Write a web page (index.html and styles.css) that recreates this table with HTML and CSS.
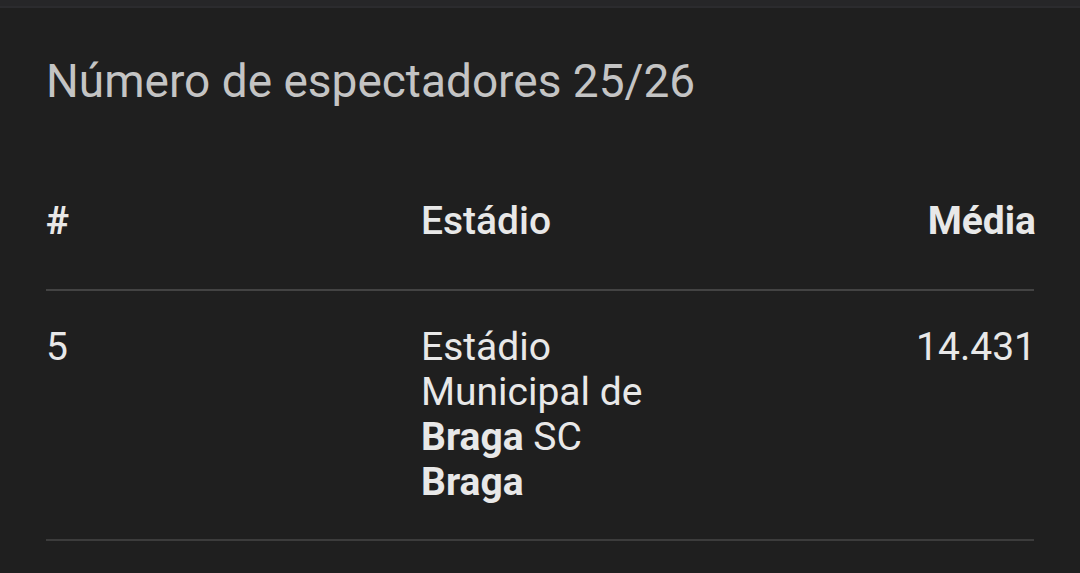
FILE: index.html
```html
<!DOCTYPE html>
<html lang="pt">

<head>
    <meta charset="UTF-8">
    <meta name="viewport" content="width=device-width, initial-scale=1.0">
    <title>Número de espectadores 25/26</title>
    <link rel="stylesheet" href="styles.css">
</head>

<body>
    <div class="top-bar"></div>
    <div class="card">
        <h2 class="card-title">Número de espectadores 25/26</h2>

        <div class="stats-table">
            <div class="row head">
                <div class="cell strong">#</div>
                <div class="cell">Estádio</div>
                <div class="cell num strong">Média</div>
            </div>
            <div class="row">
                <div class="cell">5</div>
                <div class="cell">Estádio Municipal de <b>Braga</b> SC <b>Braga</b></div>
                <div class="cell num">14.431</div>
            </div>
        </div>
    </div>
</body>

</html>
```

FILE: styles.css
```css
body {
    margin: 0;
    background-color: #1f1f1f;
    font-family: Roboto, "Noto Sans", sans-serif;
    color: #e8e8e8;
}

.top-bar {
    height: 6px;
    background-color: #262628;
    border-bottom: 2px solid #2b2b2e;
}

.card {
    padding: 0 46px;
}

.card-title {
    margin: 0;
    padding-top: 45px;
    font-size: 46px;
    font-weight: 400;
    line-height: 56px;
    color: #c4c4c4;
}

.stats-table {
    margin-top: 90px;
}

.row {
    display: grid;
    grid-template-columns: 375px 260px 1fr;
    border-bottom: 2px solid #434343;
    font-size: 39px;
    line-height: 45px;
}

.row.head {
    font-weight: 500;
    padding-bottom: 45px;
}

.row:not(.head) {
    padding: 34px 0;
    border-bottom-color: #3c3c3c;
}

.cell.strong {
    font-weight: 700;
}

.cell.num {
    text-align: right;
    margin-right: -2px;
}

b {
    font-weight: 700;
}
```
